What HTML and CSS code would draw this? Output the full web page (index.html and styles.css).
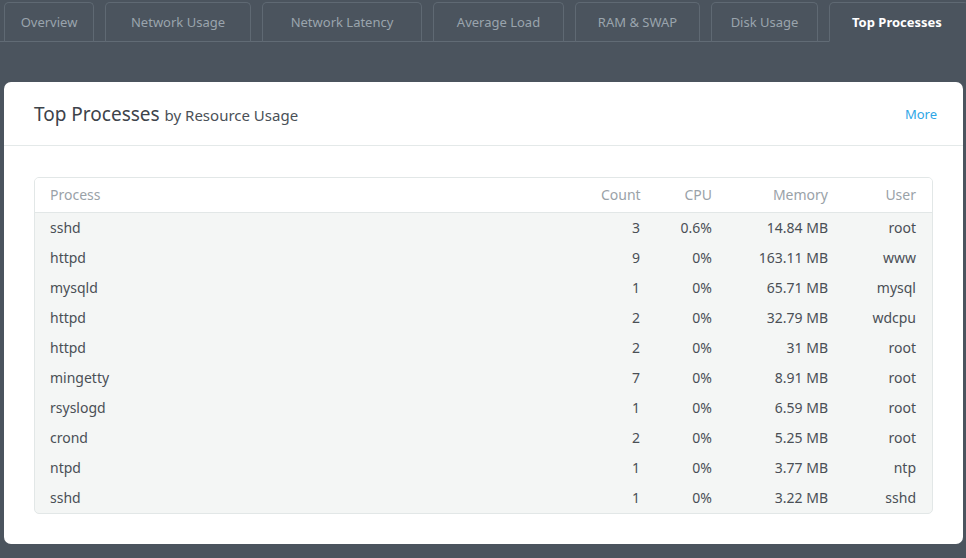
FILE: index.html
```html
<!DOCTYPE html>
<html>
<head>
<meta charset="utf-8">
<link rel="stylesheet" href="styles.css">
</head>
<body>
<nav class="tabs">
  <a class="tab t1">Overview</a>
  <a class="tab t2">Network Usage</a>
  <a class="tab t3">Network Latency</a>
  <a class="tab t4">Average Load</a>
  <a class="tab t5">RAM &amp; SWAP</a>
  <a class="tab t6">Disk Usage</a>
  <a class="tab t7 active">Top Processes</a>
</nav>
<section class="card">
  <header class="card-head">
    <h2 class="title">Top Processes <small>by Resource Usage</small></h2>
    <a class="more">More</a>
  </header>
  <div class="card-body">
    <div class="table">
      <div class="row head">
        <div>Process</div><div class="r">Count</div><div class="r">CPU</div><div class="r">Memory</div><div class="r">User</div>
      </div>
      <div class="row"><div>sshd</div><div class="r">3</div><div class="r">0.6%</div><div class="r">14.84 MB</div><div class="r">root</div></div>
      <div class="row"><div>httpd</div><div class="r">9</div><div class="r">0%</div><div class="r">163.11 MB</div><div class="r">www</div></div>
      <div class="row"><div>mysqld</div><div class="r">1</div><div class="r">0%</div><div class="r">65.71 MB</div><div class="r">mysql</div></div>
      <div class="row"><div>httpd</div><div class="r">2</div><div class="r">0%</div><div class="r">32.79 MB</div><div class="r">wdcpu</div></div>
      <div class="row"><div>httpd</div><div class="r">2</div><div class="r">0%</div><div class="r">31 MB</div><div class="r">root</div></div>
      <div class="row"><div>mingetty</div><div class="r">7</div><div class="r">0%</div><div class="r">8.91 MB</div><div class="r">root</div></div>
      <div class="row"><div>rsyslogd</div><div class="r">1</div><div class="r">0%</div><div class="r">6.59 MB</div><div class="r">root</div></div>
      <div class="row"><div>crond</div><div class="r">2</div><div class="r">0%</div><div class="r">5.25 MB</div><div class="r">root</div></div>
      <div class="row"><div>ntpd</div><div class="r">1</div><div class="r">0%</div><div class="r">3.77 MB</div><div class="r">ntp</div></div>
      <div class="row"><div>sshd</div><div class="r">1</div><div class="r">0%</div><div class="r">3.22 MB</div><div class="r">sshd</div></div>
    </div>
  </div>
</section>
</body>
</html>
```
FILE: styles.css
```css
html, body {
  margin: 0;
  padding: 0;
  background: #4b545e;
  font-family: "Noto Sans", "Open Sans", sans-serif;
  font-size: 14px;
  overflow: hidden;
}
.tabs {
  display: flex;
  gap: 11px;
  padding: 2px 0 0 4px;
  border-bottom: 1px solid #616b75;
  height: 39px;
  box-sizing: content-box;
}
.tab {
  box-sizing: border-box;
  height: 40px;
  margin-bottom: -1px;
  border: 1px solid #5f6973;
  border-bottom-color: #616b75;
  border-radius: 5px 5px 0 0;
  color: #9aa4ad;
  display: flex;
  align-items: center;
  justify-content: center;
  flex: none;
  font-size: 13px;
  padding-bottom: 1px;
}
.t1 { width: 90px; }
.t2 { width: 146px; }
.t3 { width: 160px; }
.t4 { width: 131px; }
.t5 { width: 125px; }
.t6 { width: 107px; }
.t7 { width: 140px; }
.tab.active {
  color: #ffffff;
  font-weight: bold;
  border-bottom-color: #4b545e;
  justify-content: flex-start;
  padding-left: 22px;
}
.card {
  margin: 40px 3px 0 4px;
  background: #fff;
  border-radius: 7px;
  height: 462px;
}
.card-head {
  height: 64px;
  box-sizing: border-box;
  border-bottom: 1px solid #e4e9e9;
  display: flex;
  align-items: center;
  justify-content: space-between;
  padding: 0 26px 0 30px;
}
.title {
  margin: 0;
  font-weight: normal;
  font-size: 19px;
  color: #3d434a;
  padding-top: 1px;
}
.title small {
  font-size: 15px;
  color: #4a5057;
}
.more {
  color: #2ea6e6;
  font-size: 13px;
  padding-top: 1px;
}
.card-body {
  padding: 31px 30px 30px;
}
.table {
  border: 1px solid #e2e7e7;
  border-radius: 5px;
  overflow: hidden;
  background: #f4f6f5;
}
.row {
  display: grid;
  grid-template-columns: 1fr 70px 72px 116px 88px;
  height: 30px;
  box-sizing: border-box;
  padding-bottom: 2px;
  align-items: center;
  color: #4a4f55;
}
.row > div {
  padding: 0 16px 0 15px;
  white-space: nowrap;
}
.row > div.r { text-align: right; }
.row.head {
  background: #fff;
  height: 35px;
  padding-bottom: 2px;
  border-bottom: 1px solid #e2e7e7;
  color: #9aa2a8;
}
```
